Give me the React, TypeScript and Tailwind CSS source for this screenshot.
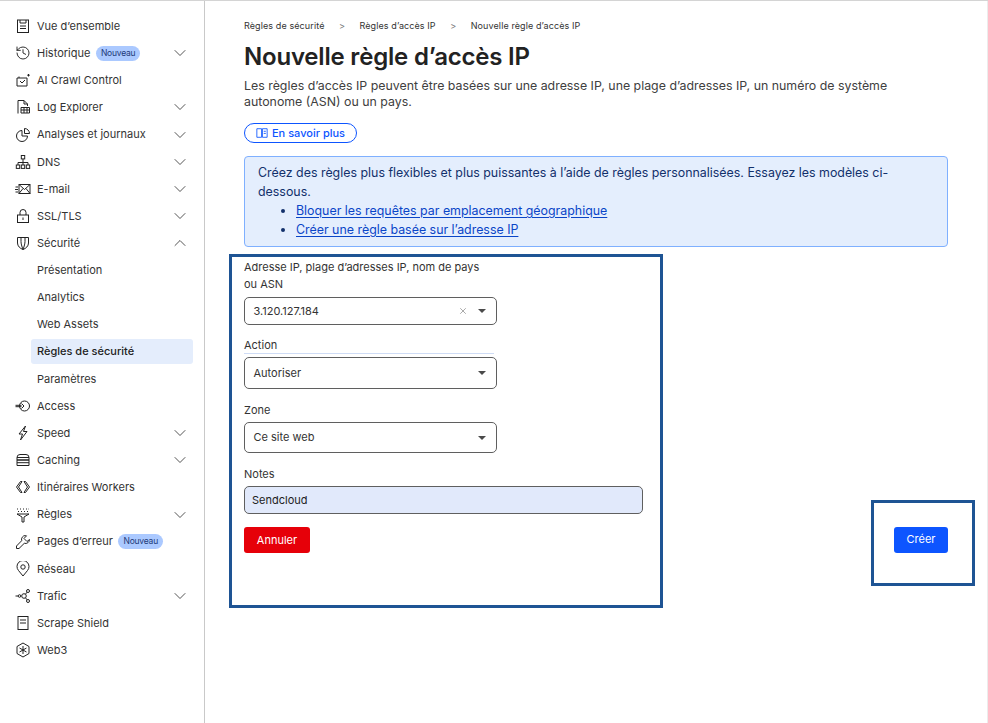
import { ChevronDown, ChevronUp, History, X } from "lucide-react";
import type { ReactNode } from "react";

const ic = "w-[16px] h-[16px] shrink-0";
const Svg = ({ children }: { children: ReactNode }) => (
  <svg viewBox="0 0 16 16" fill="none" stroke="#222" strokeWidth="1" className={ic}>
    {children}
  </svg>
);

const icons: Record<string, ReactNode> = {
  overview: <Svg><rect x="2.5" y="2" width="11" height="12.5" /><path d="M5 2v3h6V2M5 8h6M5 10.500h6" /></Svg>,
  history: <History className={ic} color="#222" strokeWidth={1.4} />,
  bot: <Svg><path d="M2 6h10v8H2zM4 4.500V6M5 9l2 2 3-3M13.500 2v2.500M12.200 3.200h2.600" /></Svg>,
  log: <Svg><path d="M3 14.500V1.500h6l3.500 3.500v2M9 1.500V5h3.500" /><path d="M6 8.500h8.500v5.500H6zM6 11h8.500M9 8.500V14M12 8.500V14" /></Svg>,
  chart: <Svg><path d="M7 3.500a5.500 5.500 0 1 0 5.500 5.500H7z" /><path d="M9.500 1.500a5 5 0 0 1 5 5h-5z" /></Svg>,
  dns: <Svg><rect x="6.300" y="1.500" width="3.400" height="3.400" /><path d="M8 5v3.500M3 11V8.500h10V11M8 8.500V11" /><rect x="1.300" y="11" width="3.400" height="3.400" /><rect x="6.300" y="11" width="3.400" height="3.400" /><rect x="11.300" y="11" width="3.400" height="3.400" /></Svg>,
  mail: <Svg><rect x="4" y="3.500" width="11" height="9" /><path d="M4 3.500l5.500 5 5.500-5M4 12.500l4-5M15 12.500l-4-5M0.500 6h2.500M0 8.500h3M0.500 11h2.500" /></Svg>,
  lock: <Svg><rect x="2.500" y="7" width="11" height="7.500" /><path d="M5 7V4.500a3 3 0 0 1 6 0V7M8 9.500v2.500" /></Svg>,
  shield: <Svg><path d="M2.500 2.500h11v5.500c0 3-2.500 5.500-5.500 6.500-3-1-5.500-3.500-5.500-6.500zM6 2.500v4c0 2 .7 4.500 2 8 1.300-3.500 2-6 2-8v-4" /></Svg>,
  access: <Svg><circle cx="9.500" cy="8" r="5" /><path d="M0.500 7.300h6M0.500 8.700h6M6.500 5.500l2.500 2.500-2.500 2.500" /></Svg>,
  speed: <Svg><path d="M10.500 1L4 9h3.500l-2 6 6.500-8.500H8.500z" /></Svg>,
  caching: <Svg><path d="M5 2.500h6a3 3 0 0 1 3 3V8H2V5.500a3 3 0 0 1 3-3zM2 8h12v5.500H2zM2 5.500h12M2 10.700h12" /></Svg>,
  workers: <Svg><path d="M5.500 2.500L1.500 8l4 5.500h1.500L3.500 8 7 2.500zM9 2.500L12.500 8 9 13.500h1.500l4-5.500-4-5.500z" /></Svg>,
  rules: <Svg><path d="M2 2h1M5 2h1M8 2h1M11 2h1M13.500 2h.5M3 4.500h1M6 4.500h1M9 4.500h1M12 4.500h1M2 7h12L9 10v5H7v-5z" /></Svg>,
  wrench: <Svg><path d="M10.500 1.500a4 4 0 0 0-3.800 5.200L1.500 12v2.500H4l5.300-5.200A4 4 0 0 0 14.500 5.500l-2.500 2-3-3 2.500-2.700z" /></Svg>,
  pin: <Svg><path d="M8 15L3.500 9.500a6 6 0 1 1 9 0z" /><circle cx="8" cy="6" r="2.200" /></Svg>,
  traffic: <Svg><circle cx="9" cy="8" r="2.300" /><circle cx="13" cy="3" r="1.500" /><circle cx="13" cy="13" r="1.500" /><circle cx="4.500" cy="8" r="1.300" /><path d="M0.500 8h2.500M10.500 6.200l1.500-2M10.500 9.800l1.500 2" /></Svg>,
  scrape: <Svg><rect x="3" y="1.500" width="10" height="13" /><path d="M5 5h6M5 8h6" /></Svg>,
  web3: <Svg><path d="M8 1l6 3.500v7L8 15l-6-3.500v-7z" /><path d="M8 4v8M4.500 6l7 4M11.500 6l-7 4" /></Svg>,
};

const Badge = () => (
  <span className="ml-[5.500px] h-[15px] px-[5px] rounded-full bg-[#abc9ff] text-[#1d3a78] text-[8.500px] leading-[15px] tracking-[-0.2px]">Nouveau</span>
);

const items: { label: string; icon?: string; chevron?: "down" | "up"; badge?: boolean; active?: boolean }[] = [
  { label: "Vue d’ensemble", icon: "overview" },
  { label: "Historique", icon: "history", chevron: "down", badge: true },
  { label: "AI Crawl Control", icon: "bot" },
  { label: "Log Explorer", icon: "log", chevron: "down" },
  { label: "Analyses et journaux", icon: "chart", chevron: "down" },
  { label: "DNS", icon: "dns", chevron: "down" },
  { label: "E-mail", icon: "mail", chevron: "down" },
  { label: "SSL/TLS", icon: "lock", chevron: "down" },
  { label: "Sécurité", icon: "shield", chevron: "up" },
  { label: "Présentation" },
  { label: "Analytics" },
  { label: "Web Assets" },
  { label: "Règles de sécurité", active: true },
  { label: "Paramètres" },
  { label: "Access", icon: "access" },
  { label: "Speed", icon: "speed", chevron: "down" },
  { label: "Caching", icon: "caching", chevron: "down" },
  { label: "Itinéraires Workers", icon: "workers" },
  { label: "Règles", icon: "rules", chevron: "down" },
  { label: "Pages d’erreur", icon: "wrench", badge: true },
  { label: "Réseau", icon: "pin" },
  { label: "Trafic", icon: "traffic", chevron: "down" },
  { label: "Scrape Shield", icon: "scrape" },
  { label: "Web3", icon: "web3" },
];

const Caret = () => <span className="w-0 h-0 border-x-[4.500px] border-x-transparent border-t-[4.500px] border-t-[#4a4a4a]" />;

const Select = ({ value, clear, h }: { value: string; clear?: boolean; h: string }) => (
  <div className={`${h} w-[253px] flex items-center pl-[8.500px] pr-[10px] border border-[#5f5f5f] rounded-[5px] text-[11px] text-[#333]`}>
    <span className="flex-1">{value}</span>
    {clear && <X className="w-[10px] h-[10px] mr-[10px]" color="#777" strokeWidth={1.5} />}
    <Caret />
  </div>
);

export default function App() {
  return (
    <div className="w-[988px] h-[723px] overflow-hidden flex bg-white border-t border-[#d4d4d4] text-[#333] font-['Inter',sans-serif]">
      <aside className="w-[205px] shrink-0 border-r border-[#c9c9c9] pt-[11.500px]">
        {items.map((it) => (
          <div key={it.label} className="h-[27.150px] pl-[15px] pr-[11px] flex items-center text-[11px] text-[#333]">
            {it.icon ? (
              <>
                <span className="w-[22px] shrink-0">{icons[it.icon]}</span>
                <span>{it.label}</span>
              </>
            ) : (
              <span className={it.active ? "ml-[16px] w-[165px] h-[25px] rounded-[3px] bg-[#e4edfc] pl-[6px] leading-[25px] font-medium text-[#222]" : "ml-[22px]"}>{it.label}</span>
            )}
            {it.badge && <Badge />}
            {it.chevron === "down" && <ChevronDown className="ml-auto mr-[3px] w-[20px] h-[20px]" color="#333" strokeWidth={1} />}
            {it.chevron === "up" && <ChevronUp className="ml-auto mr-[3px] w-[20px] h-[20px]" color="#333" strokeWidth={1} />}
          </div>
        ))}
      </aside>

      <main className="flex-1 pl-[24px] pr-[12px] pt-[18px] border-r border-[#ececec]">
        <div className="pl-[15px] pr-[27px]">
          <nav className="flex items-center h-[13px] text-[9px] text-[#333] tracking-[0.1px]">
            <span>Règles de sécurité</span>
            <span className="w-[35px] text-center text-[#777]">&gt;</span>
            <span>Règles d’accès IP</span>
            <span className="w-[35px] text-center text-[#777]">&gt;</span>
            <span>Nouvelle règle d’accès IP</span>
          </nav>
          <h1 className="mt-[9px] text-[24px] leading-[32px] font-semibold text-[#222] tracking-[-0.2px]">Nouvelle règle d’accès IP</h1>
          <p className="mt-[5px] text-[12.370px] leading-[16px] text-[#404040]">
            Les règles d’accès IP peuvent être basées sur une adresse IP, une plage d’adresses IP, un numéro de système autonome (ASN) ou un pays.
          </p>
          <a className="mt-[13px] w-[113px] h-[20px] flex items-center justify-center gap-[4px] rounded-full border border-[#0d55ff] text-[#0d55ff] text-[11px] font-medium">
            <svg viewBox="0 0 14 14" fill="none" stroke="#0d55ff" strokeWidth="1" className="w-[12px] h-[12px]"><path d="M1 2h5.500v10H1zM7.500 2H13v10H7.500zM9 5h2.500M9 7.500h2.500" /></svg>
            En savoir plus
          </a>
          <div className="mt-[13px] h-[91px] rounded-[4px] border border-[#7fb0ff] bg-[#e4eefd] pl-[13px] pr-[40px] pt-[6px] text-[12.400px] leading-[19px] text-[#12306b]">
            <p>Créez des règles plus flexibles et plus puissantes à l’aide de règles personnalisées. Essayez les modèles ci-dessous.</p>
            <ul className="list-disc pl-[38px]">
              <li><a className="underline underline-offset-[2px] text-[#0a45c7]">Bloquer les requêtes par emplacement géographique</a></li>
              <li><a className="underline underline-offset-[2px] text-[#0a45c7]">Créer une règle basée sur l’adresse IP</a></li>
            </ul>
          </div>
        </div>

        <div className="mt-[7px] flex justify-between">
          <section className="w-[434px] h-[354px] border-[3px] border-[#1e5494] pl-[12px] pt-[2px]">
            <label className="block w-[240px] text-[11px] leading-[17px] text-[#333]">Adresse IP, plage d’adresses IP, nom de pays ou ASN</label>
            <div className="mt-[4px]"><Select value="3.120.127.184" clear h="h-[28px]" /></div>
            <label className="block mt-[13px] w-[250px] h-[16px] border-b border-[#cfdcf5] text-[11px] leading-[14px]">Action</label>
            <div className="mt-[3px]"><Select value="Autoriser" h="h-[32px]" /></div>
            <label className="block mt-[13px] text-[11px] leading-[16px]">Zone</label>
            <div className="mt-[4px]"><Select value="Ce site web" h="h-[31px]" /></div>
            <label className="block mt-[13px] text-[11px] leading-[16px]">Notes</label>
            <div className="mt-[4px] w-[399px] h-[28px] flex items-center pl-[7px] rounded-[5px] border border-[#5f5f5f] bg-[#e1e9fb] text-[11px] text-[#222]">Sendcloud</div>
            <button className="block mt-[13px] w-[66px] h-[26px] rounded-[3px] bg-[#e60009] text-white text-[11px]">Annuler</button>
          </section>
          <div className="self-end mb-[22px] w-[104px] h-[86px] pb-[7px] pr-[4px] border-[3px] border-[#1e5494] flex items-center justify-center">
            <button className="w-[54px] h-[26px] rounded-[3px] bg-[#0d55ff] text-white text-[11px]">Créer</button>
          </div>
        </div>
      </main>
    </div>
  );
}
